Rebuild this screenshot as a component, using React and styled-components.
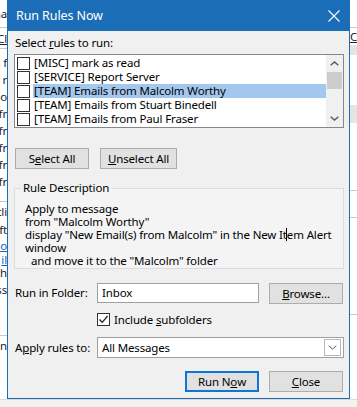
import React from 'react'
import styled, { createGlobalStyle } from 'styled-components'

const GlobalStyle = createGlobalStyle`
  html, body {
    margin: 0;
    padding: 0;
    background: #fff;
  }
  body {
    font-family: "Noto Sans", "Open Sans", sans-serif;
    font-size: 11.5px;
    letter-spacing: -0.15px;
    color: #000;
  }
`

const Page = styled.div`
  width: 357px;
  height: 407px;
  overflow: hidden;
  display: flex;
  flex-direction: column;
  background: #fff;
`

const Stage = styled.div`
  display: flex;
  height: 399px;
  flex: none;
`

const BottomBand = styled.div`
  flex: 1;
  background: #f2f2f2;
  border-top: 1px solid #dadada;
`

const Strip = styled.div`
  width: 7px;
  flex: none;
  overflow: hidden;
  display: flex;
  flex-direction: column;
  background: #fff;
`

const Frag = styled.div`
  height: ${p => p.$h}px;
  flex: none;
  box-sizing: border-box;
  display: flex;
  align-items: center;
  justify-content: ${p => (p.$side === 'left' ? 'flex-end' : 'flex-start')};
  white-space: nowrap;
  color: ${p => (p.$link ? '#1a5fb4' : '#222')};
  text-decoration: ${p => (p.$u ? 'underline' : 'none')};
  background: ${p => p.$bg || 'transparent'};
  border-bottom: ${p => (p.$line ? '1px solid #c8c8c8' : 'none')};
`

const Dialog = styled.div`
  width: 343px;
  flex: none;
  box-sizing: border-box;
  border: 1px solid #1c6cb5;
  border-top: none;
  background: #f0f0f0;
  display: flex;
  flex-direction: column;
`

const TitleBar = styled.div`
  height: 31px;
  flex: none;
  background: #1b6db7;
  color: #fff;
  display: flex;
  align-items: center;
  justify-content: space-between;
  padding: 0 9px 0 8px;
  font-size: 12.5px;
  letter-spacing: -0.1px;
`

const Body = styled.div`
  display: flex;
  flex-direction: column;
  padding: 0 5px 0 6px;
`

const Label = styled.div`
  line-height: 16px;
  margin-top: ${p => p.$mt || 0}px;
  padding-left: 1px;
  white-space: nowrap;
`

const ListBox = styled.div`
  margin-top: 3px;
  height: 74px;
  box-sizing: border-box;
  border: 1px solid #828790;
  background: #fff;
  display: flex;
`

const Rows = styled.div`
  flex: 1;
  padding-top: 1px;
  display: flex;
  flex-direction: column;
`

const Row = styled.div`
  height: 14px;
  display: flex;
  align-items: center;
  padding-left: 2px;
`

const RowText = styled.span`
  flex: 1;
  height: 14px;
  line-height: 14px;
  margin-left: 3px;
  padding-left: 1px;
  white-space: nowrap;
  background: ${p => (p.$selected ? '#a4c7ee' : 'transparent')};
`

const Box = styled.span`
  width: 13px;
  height: 13px;
  flex: none;
  box-sizing: border-box;
  border: 1px solid #333;
  background: #fff;
  display: flex;
  align-items: center;
  justify-content: center;
`

const ScrollBar = styled.div`
  width: 17px;
  flex: none;
  background: #f0f0f0;
  display: flex;
  flex-direction: column;
  align-items: center;
`

const ScrollArrow = styled.div`
  height: 17px;
  width: 100%;
  display: flex;
  align-items: center;
  justify-content: center;
`

const Thumb = styled.div`
  width: 15px;
  height: 17px;
  background: #cdcdcd;
`

const Track = styled.div`
  flex: 1;
`

const ButtonRow = styled.div`
  display: flex;
  gap: ${p => p.$gap || 11}px;
  margin-top: ${p => p.$mt || 0}px;
  justify-content: ${p => (p.$end ? 'flex-end' : 'flex-start')};
  padding-left: 1px;
  padding-right: ${p => (p.$end ? 1 : 0)}px;
`

const Button = styled.div`
  width: ${p => p.$w || 74}px;
  height: 21px;
  box-sizing: border-box;
  border: ${p => (p.$default ? '2px solid #0a78d4' : '1px solid #adadad')};
  background: #e1e1e1;
  display: flex;
  align-items: center;
  justify-content: center;
  white-space: nowrap;
  flex: none;
  margin-top: ${p => p.$mt || 0}px;
  margin-right: ${p => p.$mr || 0}px;
`

const Group = styled.fieldset`
  margin: 11px 0 0 0;
  padding: 6px 8px 1px 10px;
  border: 1px solid #dcdcdc;
  background: #f4f4f4;
  min-width: 0;
`

const Legend = styled.legend`
  padding: 0 2px;
  margin-left: -4px;
  line-height: 16px;
`

const Desc = styled.div`
  line-height: 13px;
  white-space: nowrap;
  padding-left: ${p => (p.$indent ? 6 : 0)}px;
`

const Caret = styled.span`
  display: inline-block;
  width: 1px;
  height: 13px;
  background: #000;
  vertical-align: top;
  margin: 0 -0.5px;
`

const FieldRow = styled.div`
  display: flex;
  align-items: center;
  margin-top: ${p => p.$mt || 0}px;
`

const FieldLabel = styled.div`
  width: 83px;
  flex: none;
  padding-left: 1px;
  box-sizing: border-box;
  white-space: nowrap;
`

const TextInput = styled.div`
  width: ${p => p.$w}px;
  height: ${p => p.$h || 20}px;
  flex: none;
  box-sizing: border-box;
  border: 1px solid #a0a0a0;
  background: #fff;
  display: flex;
  align-items: center;
  padding: 0 2px 0 4px;
  justify-content: space-between;
`

const DropArrow = styled.div`
  width: 17px;
  height: 17px;
  box-sizing: border-box;
  border: 1px solid #b9b9b9;
  background: #fff;
  display: flex;
  align-items: center;
  justify-content: center;
`

const CheckRow = styled.div`
  display: flex;
  align-items: center;
  gap: 4px;
  margin: 8px 0 0 83px;
`

const Filler = styled.div`
  flex: 1;
`

const Chevron = ({ up, color = '#606060', w = 9, h = 5, sw = 1.5 }) => (
  <svg width={w} height={h} viewBox={`0 0 ${w} ${h}`}>
    <path
      d={up ? `M0.7 ${h - 0.7} L${w / 2} 0.9 L${w - 0.7} ${h - 0.7}` : `M0.7 0.7 L${w / 2} ${h - 0.9} L${w - 0.7} 0.7`}
      fill="none"
      stroke={color}
      strokeWidth={sw}
    />
  </svg>
)

const CloseIcon = () => (
  <svg width="12" height="12" viewBox="0 0 12 12">
    <path d="M0.5 0.5 L11.5 11.5 M11.5 0.5 L0.5 11.5" stroke="#fff" strokeWidth="1.1" />
  </svg>
)

const CheckMark = () => (
  <svg width="11" height="11" viewBox="0 0 11 11">
    <path d="M1.5 5.5 L4.2 8.3 L9.6 2" fill="none" stroke="#222" strokeWidth="1.3" />
  </svg>
)

const rules = [
  '[MISC] mark as read',
  '[SERVICE] Report Server',
  '[TEAM] Emails from Malcolm Worthy',
  '[TEAM] Emails from Stuart Binedell',
  '[TEAM] Emails from Paul Fraser',
]

const leftFrags = [
  { h: 28, t: 'cha', line: true },
  { h: 21, t: 'Cl', u: true, line: true },
  { h: 5, t: '' },
  { h: 17, t: 'on f' },
  { h: 17, t: 'ss r' },
  { h: 17, t: 'bo' },
  { h: 17, t: 'fr' },
  { h: 17, t: 'fr' },
  { h: 17, t: 'fr' },
  { h: 17, t: 'fr' },
  { h: 17, t: 'fr' },
  { h: 12, t: '', line: true },
  { h: 18, t: 'cli' },
  { h: 18, t: 'ft' },
  { h: 15, t: 'o', u: true, link: true },
  { h: 12, t: 'il', u: true, link: true },
  { h: 14, t: 'th' },
  { h: 20, t: 'ss' },
  { h: 37, t: '', line: true },
  { h: 18, t: 'n' },
]

const rightFrags = [
  { h: 28, t: '', line: true },
  { h: 17, t: 'C', u: true },
  { h: 10, t: '', bg: '#e4e4e4' },
  { h: 50, t: '' },
  { h: 18, t: '', bg: '#e4e4e4' },
  { h: 68, t: '', line: true },
  { h: 27, t: '', line: true },
  { h: 97, t: '', line: true },
]

export default function App() {
  return (
    <Page>
      <GlobalStyle />
      <Stage>
        <Strip>
          {leftFrags.map((f, i) => (
            <Frag key={i} $h={f.h} $side="left" $u={f.u} $link={f.link} $line={f.line}>
              {f.t}
            </Frag>
          ))}
        </Strip>
        <Dialog>
          <TitleBar>
            <span>Run Rules Now</span>
            <CloseIcon />
          </TitleBar>
          <Body>
            <Label $mt={4}>
              Select <u>r</u>ules to run:
            </Label>
            <ListBox>
              <Rows>
                {rules.map((r, i) => (
                  <Row key={r}>
                    <Box />
                    <RowText $selected={i === 2}>{r}</RowText>
                  </Row>
                ))}
              </Rows>
              <ScrollBar>
                <ScrollArrow>
                  <Chevron up />
                </ScrollArrow>
                <Thumb />
                <Track />
                <ScrollArrow>
                  <Chevron />
                </ScrollArrow>
              </ScrollBar>
            </ListBox>
            <ButtonRow $mt={20}>
              <Button $w={74}>
                S<u>e</u>lect All
              </Button>
              <Button $w={77}>
                <u>U</u>nselect All
              </Button>
            </ButtonRow>
            <Group>
              <Legend>Rule Description</Legend>
              <Desc>Apply to message</Desc>
              <Desc>from "Malcolm Worthy"</Desc>
              <Desc>
                display "New Email(s) from Malcolm" in the New It<Caret />em Alert
              </Desc>
              <Desc>window</Desc>
              <Desc $indent>and move it to the "Malcolm" folder</Desc>
            </Group>
            <FieldRow $mt={12}>
              <FieldLabel>Run in Folder:</FieldLabel>
              <TextInput $w={162}>Inbox</TextInput>
              <Filler />
              <Button $mt={2} $mr={1}>
                <u>B</u>rowse...
              </Button>
            </FieldRow>
            <CheckRow>
              <Box>
                <CheckMark />
              </Box>
              <span>
                Include <u>s</u>ubfolders
              </span>
            </CheckRow>
            <FieldRow $mt={10}>
              <FieldLabel>
                A<u>p</u>ply rules to:
              </FieldLabel>
              <TextInput $w={247} $h={21}>
                <span>All Messages</span>
                <DropArrow>
                  <Chevron color="#555" w={9} h={5} sw={1} />
                </DropArrow>
              </TextInput>
            </FieldRow>
            <ButtonRow $mt={13} $end $gap={10}>
              <Button $default>
                Run N<u>o</u>w
              </Button>
              <Button>
                <u>C</u>lose
              </Button>
            </ButtonRow>
          </Body>
        </Dialog>
        <Strip>
          {rightFrags.map((f, i) => (
            <Frag key={i} $h={f.h} $side="right" $u={f.u} $line={f.line} $bg={f.bg}>
              {f.t}
            </Frag>
          ))}
        </Strip>
      </Stage>
      <BottomBand />
    </Page>
  )
}
